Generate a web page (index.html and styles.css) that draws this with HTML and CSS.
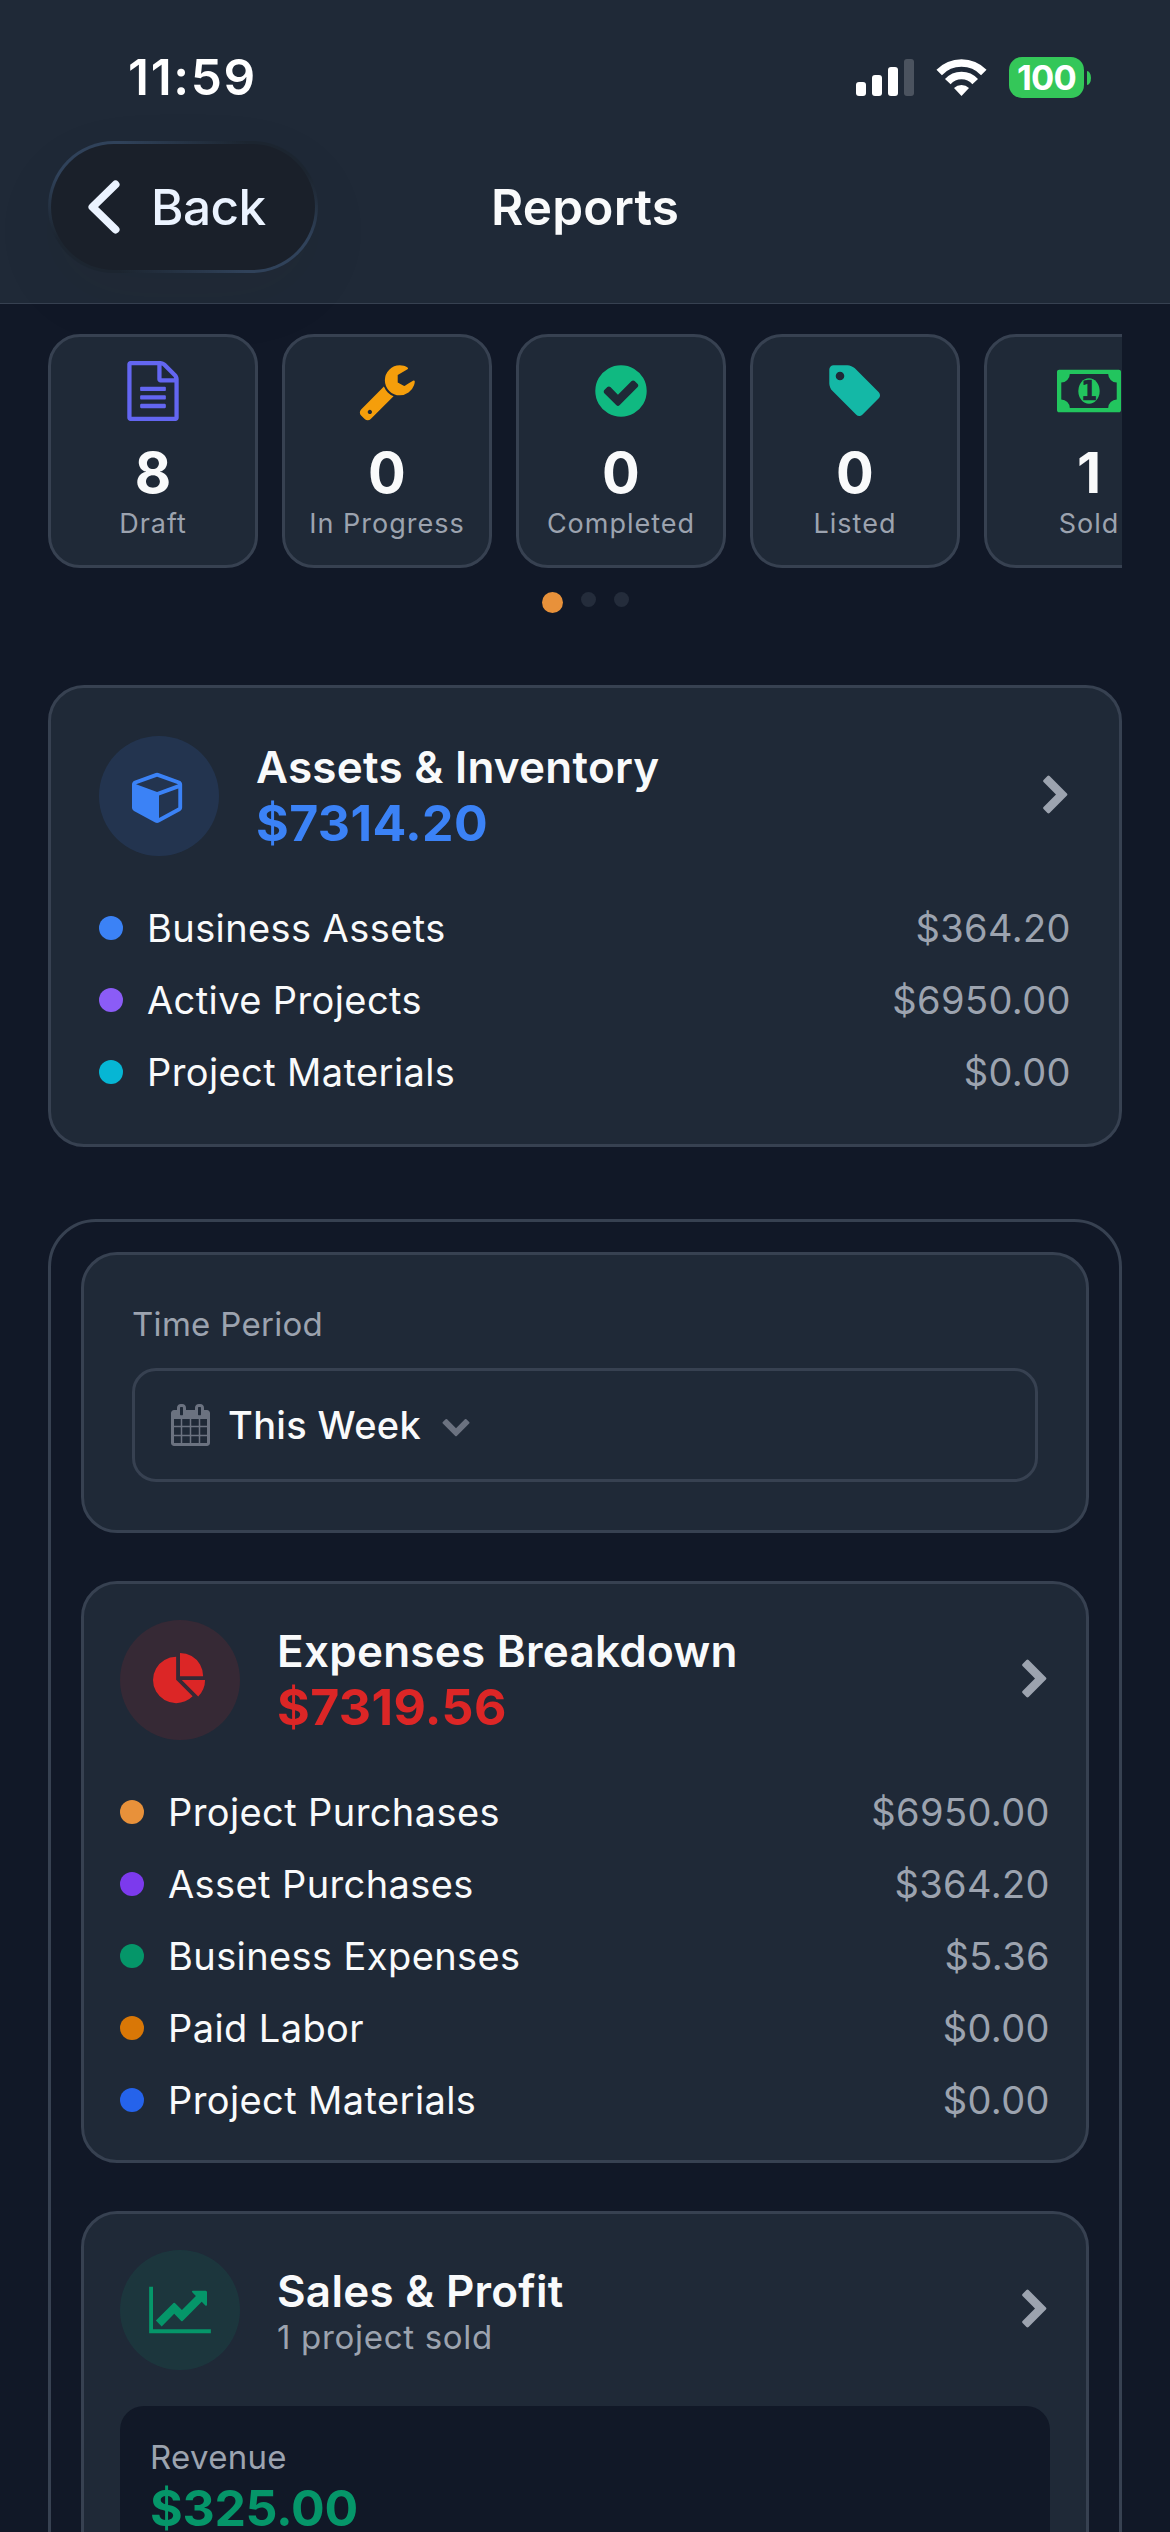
FILE: index.html
```
<!DOCTYPE html>
<html lang="en">

<head>
  <title>Reports</title>
  <meta charset="utf-8">
  <link rel="stylesheet" href="styles.css">
</head>

<body>
  <header>
    <div class="status">
      <span class="time">11:59</span>
      <div class="indicators">
        <svg class="signal" viewBox="0 0 58 37">
          <rect x="0" y="23" width="10" height="14" rx="3" />
          <rect x="16" y="16" width="10" height="21" rx="3" />
          <rect x="32" y="8" width="10" height="29" rx="3" />
          <rect x="48" y="0" width="10" height="37" rx="3" opacity=".2" />
        </svg>
        <svg class="wifi" viewBox="0 0 51 37">
          <path class="arc" d="M3.2 13.5A31 31 0 0 1 47.8 13.5" />
          <path class="arc" d="M11.8 22.6A18.5 18.5 0 0 1 39.2 22.6" />
          <path d="M25.5 37L18 29a11 11 0 0 1 15 0z" />
        </svg>
        <div class="battery">100</div>
        <div class="battery-tip"></div>
      </div>
    </div>
    <nav>
      <button class="back">
        <svg viewBox="0 0 32 54">
          <path d="M27.5 4.5L4.5 27l23 22.5" />
        </svg>
        Back
      </button>
      <h1>Reports</h1>
    </nav>
  </header>

  <main>
    <div class="stats">
      <div class="stat">
        <svg class="icon-lg indigo" viewBox="-128 0 1792 1792">
          <path d="M1468 380q28 28 48 76t20 88v1152q0 40-28 68t-68 28h-1344q-40 0-68-28t-28-68v-1600q0-40 28-68t68-28h896q40 0 88 20t76 48zM1024 136v376h376q-10-29-22-41l-313-313q-12-12-41-22zM1408 1664v-1024h-416q-40 0-68-28t-28-68v-416h-768v1536h1280zM384 800q0-14 9-23t23-9h704q14 0 23 9t9 23v64q0 14-9 23t-23 9h-704q-14 0-23-9t-9-23v-64zM1120 1024q14 0 23 9t9 23v64q0 14-9 23t-23 9h-704q-14 0-23-9t-9-23v-64q0-14 9-23t23-9h704zM1120 1280q14 0 23 9t9 23v64q0 14-9 23t-23 9h-704q-14 0-23-9t-9-23v-64q0-14 9-23t23-9h704z" />
        </svg>
        <strong>8</strong>
        <span>Draft</span>
      </div>
      <div class="stat">
        <svg class="icon-lg amber" viewBox="0 -50 1792 1792">
          <path d="M448 1472q0-26-19-45t-45-19-45 19-19 45 19 45 45 19 45-19 19-45zM1092 1002l-682 682q-37 37-90 37-52 0-91-37l-106-108q-38-36-38-90 0-53 38-91l681-681q39 98 114.500 173.500t173.500 114.500zM1726 567q0 39-23 106-47 134-164.500 217.500t-258.500 83.500q-185 0-316.500-131.500t-131.500-316.500 131.500-316.500 316.500-131.500q58 0 121.500 16.500t107.500 46.500q16 11 16 28t-16 28l-293 169v224l193 107q5-3 79-48.500t135.500-81 70.500-35.500q15 0 23.500 10t8.500 25z" />
        </svg>
        <strong>0</strong>
        <span>In Progress</span>
      </div>
      <div class="stat">
        <svg class="icon-lg emerald" viewBox="0 0 1792 1792">
          <path d="M1412 734q0-28-18-46l-91-90q-19-19-45-19t-45 19l-408 407-226-226q-19-19-45-19t-45 19l-91 90q-18 18-18 46 0 27 18 45l362 362q19 19 45 19 27 0 46-19l543-543q18-18 18-45zM1664 896q0 209-103 385.500t-279.500 279.500-385.500 103-385.500-103-279.500-279.500-103-385.500 103-385.500 279.500-279.500 385.500-103 385.500 103 279.500 279.500 103 385.500z" />
        </svg>
        <strong>0</strong>
        <span>Completed</span>
      </div>
      <div class="stat">
        <svg class="icon-lg teal" viewBox="0 0 1792 1792">
          <path d="M576 448q0-53-37.500-90.500t-90.500-37.500-90.500 37.500-37.500 90.500 37.500 90.500 90.500 37.500 90.500-37.500 37.500-90.500zM1643 1024q0 53-37 90l-491 492q-39 37-91 37-53 0-90-37l-715-716q-38-37-64.500-101t-26.500-117v-416q0-52 38-90t90-38h416q53 0 117 26.500t102 64.500l715 714q37 39 37 91z" />
        </svg>
        <strong>0</strong>
        <span>Listed</span>
      </div>
      <div class="stat">
        <svg class="icon-lg money green" viewBox="0 0 1920 1792">
          <path fill-rule="evenodd" d="M1792 1152v-512q-106 0-181-75t-75-181h-1152q0 106-75 181t-181 75v512q106 0 181 75t75 181h1152q0-106 75-181t181-75zM1920 320v1152q0 26-19 45t-45 19h-1792q-26 0-45-19t-19-45v-1152q0-26 19-45t45-19h1792q26 0 45 19t19 45z" />
          <ellipse cx="960" cy="896" rx="320" ry="384" />
          <text x="960" y="1152" text-anchor="middle">1</text>
        </svg>
        <strong>1</strong>
        <span>Sold</span>
      </div>
    </div>
    <div class="pager">
      <i class="active"></i>
      <i></i>
      <i></i>
    </div>

    <section class="card assets">
      <div class="card-head">
        <div class="badge blue">
          <svg class="icon" viewBox="0 0 1792 1792">
            <path d="M896 1629l640-349v-636l-640 233v752zM832 764l698-254-698-254-698 254zM1664 512v768q0 35-18 65t-49 47l-704 384q-28 16-61 16t-61-16l-704-384q-31-17-49-47t-18-65v-768q0-40 23-73t61-47l704-256q22-8 44-8t44 8l704 256q38 14 61 47t23 73z" />
          </svg>
        </div>
        <div class="heading">
          <h2>Assets &amp; Inventory</h2>
          <div class="amount blue">$7314.20</div>
        </div>
        <svg class="chevron" viewBox="256 0 1280 1792">
          <path d="M1363 877l-742 742q-19 19-45 19t-45-19l-166-166q-19-19-19-45t19-45l531-531-531-531q-19-19-19-45t19-45l166-166q19-19 45-19t45 19l742 742q19 19 19 45t-19 45z" />
        </svg>
      </div>
      <ul>
        <li><i class="dot" style="background: #3b82f6"></i>Business Assets<span>$364.20</span></li>
        <li><i class="dot" style="background: #8b5cf6"></i>Active Projects<span>$6950.00</span></li>
        <li><i class="dot" style="background: #06b6d4"></i>Project Materials<span>$0.00</span></li>
      </ul>
    </section>

    <div class="period-group">
      <section class="card period">
        <label>Time Period</label>
        <div class="select">
          <svg class="calendar" viewBox="64 0 1664 1792">
            <path d="M192 1664h288v-288h-288v288zM544 1664h320v-288h-320v288zM192 1312h288v-320h-288v320zM544 1312h320v-320h-320v320zM192 928h288v-288h-288v288zM928 1664h320v-288h-320v288zM544 928h320v-288h-320v288zM1312 1664h288v-288h-288v288zM928 1312h320v-320h-320v320zM576 448v-288q0-13-9.500-22.500t-22.500-9.500h-64q-13 0-22.500 9.500t-9.500 22.500v288q0 13 9.500 22.500t22.500 9.500h64q13 0 22.500-9.500t9.500-22.500zM1312 1312h288v-320h-288v320zM928 928h320v-288h-320v288zM1312 928h288v-288h-288v288zM1344 448v-288q0-13-9.500-22.500t-22.500-9.500h-64q-13 0-22.500 9.500t-9.500 22.500v288q0 13 9.500 22.500t22.500 9.500h64q13 0 22.500-9.500t9.500-22.500zM1728 384v1280q0 52-38 90t-90 38h-1408q-52 0-90-38t-38-90v-1280q0-52 38-90t90-38h128v-96q0-66 47-113t113-47h64q66 0 113 47t47 113v96h384v-96q0-66 47-113t113-47h64q66 0 113 47t47 113v96h128q52 0 90 38t38 90z" />
          </svg>
          This Week
          <svg class="caret" viewBox="0 0 1792 1792">
            <path d="M1683 808l-742 741q-19 19-45 19t-45-19l-742-741q-19-19-19-45.500t19-45.500l166-165q19-19 45-19t45 19l531 531 531-531q19-19 45-19t45 19l166 165q19 19 19 45.500t-19 45.500z" />
          </svg>
        </div>
      </section>

      <section class="card">
        <div class="card-head">
          <div class="badge red">
            <svg class="icon" viewBox="0 0 1792 1792">
              <path d="M768 890l546 546q-106 108-247.500 168t-298.500 60q-209 0-385.500-103t-279.500-279.500-103-385.500 103-385.500 279.500-279.500 385.500-103v762zM955 896h773q0 157-60 298.500t-168 247.500zM1664 768h-768v-768q209 0 385.500 103t279.500 279.500 103 385.500z" />
            </svg>
          </div>
          <div class="heading">
            <h2>Expenses Breakdown</h2>
            <div class="amount red">$7319.56</div>
          </div>
          <svg class="chevron" viewBox="256 0 1280 1792">
            <path d="M1363 877l-742 742q-19 19-45 19t-45-19l-166-166q-19-19-19-45t19-45l531-531-531-531q-19-19-19-45t19-45l166-166q19-19 45-19t45 19l742 742q19 19 19 45t-19 45z" />
          </svg>
        </div>
        <ul>
          <li><i class="dot" style="background: #e8913a"></i>Project Purchases<span>$6950.00</span></li>
          <li><i class="dot" style="background: #7c3aed"></i>Asset Purchases<span>$364.20</span></li>
          <li><i class="dot" style="background: #059669"></i>Business Expenses<span>$5.36</span></li>
          <li><i class="dot" style="background: #d97706"></i>Paid Labor<span>$0.00</span></li>
          <li><i class="dot" style="background: #2563eb"></i>Project Materials<span>$0.00</span></li>
        </ul>
      </section>

      <section class="card">
        <div class="card-head">
          <div class="badge profit">
            <svg class="icon chart" viewBox="0 0 2048 1792">
              <path d="M2048 1536v128h-2048v-1536h128v1408h1920zM1920 288v435q0 21-19.500 29.500t-35.500-7.500l-121-121-633 633q-10 10-23 10t-23-10l-233-233-416 416-192-192 585-585q10-10 23-10t23 10l233 233 464-464-121-121q-16-16-7.500-35.500t19.500-19.500h435q14 0 23 9t9 23z" />
            </svg>
          </div>
          <div class="heading">
            <h2>Sales &amp; Profit</h2>
            <p>1 project sold</p>
          </div>
          <svg class="chevron" viewBox="256 0 1280 1792">
            <path d="M1363 877l-742 742q-19 19-45 19t-45-19l-166-166q-19-19-19-45t19-45l531-531-531-531q-19-19-19-45t19-45l166-166q19-19 45-19t45 19l742 742q19 19 19 45t-19 45z" />
          </svg>
        </div>
        <div class="revenue">
          <label>Revenue</label>
          <div class="amount profit">$325.00</div>
        </div>
      </section>
    </div>
  </main>
</body>

</html>
```
FILE: styles.css
```
* {
  box-sizing: border-box;
  margin: 0;
  padding: 0;
}

body {
  height: 2532px;
  overflow: hidden;
  background-color: #111827;
  color: #f9fafb;
  font-family: Inter, "Liberation Sans", sans-serif;
}

svg {
  display: block;
  flex: none;
  fill: currentColor;
}

/* header */
header {
  height: 304px;
  background-color: #1f2937;
  border-bottom: 1px solid #374151;
}

.status {
  height: 141px;
  padding: 57px 79px 0 128px;
  display: flex;
  justify-content: space-between;
  align-items: flex-start;
  color: white;
}

.time {
  font-size: 49.5px;
  font-weight: 600;
  line-height: 41px;
  letter-spacing: 1.7px;
}

.indicators {
  height: 41px;
  display: flex;
  align-items: center;
}

.signal {
  width: 58px;
  height: 37px;
}

.wifi {
  width: 51px;
  height: 37px;
  margin: 0 22px;
}

.arc {
  fill: none;
  stroke: white;
  stroke-width: 7.6;
}

.battery {
  width: 75px;
  height: 41px;
  border-radius: 13px;
  background-color: #34c759;
  font-size: 34.5px;
  font-weight: 700;
  line-height: 41px;
  letter-spacing: -.8px;
  text-align: center;
}

.battery-tip {
  width: 4px;
  height: 14px;
  margin-left: 3px;
  border-radius: 0 4px 4px 0 / 0 7px 7px 0;
  background-color: #34c759;
}

nav {
  padding: 0 48px;
  display: grid;
  grid-template-columns: 1fr auto 1fr;
  align-items: center;
}

.back {
  width: 270px;
  height: 132px;
  padding-left: 37px;
  display: flex;
  align-items: center;
  gap: 31px;
  border: 3px solid transparent;
  border-radius: 66px;
  /* fill, then the rim that fades out at the top right and bottom left */
  background:
    linear-gradient(#1a202a, #1a202a) padding-box,
    linear-gradient(27deg, #1c2530 14%, #30425a 38%, #30425a 62%, #1c2530 86%) border-box;
  box-shadow: 0 24px 72px rgba(34, 38, 26, .05);
  color: #ebf3ff;
  font-family: inherit;
  font-size: 49.5px;
  font-weight: 500;
  letter-spacing: -.6px;
}

.back svg {
  width: 32px;
  height: 54px;
}

.back path {
  fill: none;
  stroke: #ebf3ff;
  stroke-width: 8;
  stroke-linecap: round;
  stroke-linejoin: round;
}

h1 {
  font-size: 49.5px;
  font-weight: 600;
  letter-spacing: .2px;
}

main {
  padding: 30px 48px 0;
}

/* status counters */
.stats {
  display: flex;
  gap: 24px;
  overflow: hidden;
}

.stat {
  flex: 0 0 210px;
  height: 234px;
  padding-top: 24px;
  display: flex;
  flex-direction: column;
  align-items: center;
  background-color: #1f2937;
  border: 3px solid #374151;
  border-radius: 32px;
}

.stat strong {
  margin-top: 19px;
  font-size: 56px;
  line-height: 66px;
}

.stat span {
  color: #9ca3af;
  font-size: 27px;
  line-height: 36px;
  letter-spacing: 1px;
}

.icon-lg {
  width: 60px;
  height: 60px;
}

.money {
  width: 64px;
}

.money text {
  fill: #1f2937;
  stroke: #1f2937;
  stroke-width: 20;
  font: bold 780px "DejaVu Sans Mono", monospace;
}

.indigo { color: #6366f1; }
.amber { color: #f59e0b; }
.emerald { color: #10b981; }
.teal { color: #14b8a6; }
.green { color: #22c55e; }

.pager {
  height: 21px;
  margin: 24px 0 72px;
  display: flex;
  justify-content: center;
  gap: 18px;
}

.pager i {
  width: 15px;
  height: 15px;
  border-radius: 50%;
  background-color: #242c3b;
}

.pager .active {
  width: 21px;
  height: 21px;
  background-color: #e8913a;
}

/* cards */
.card {
  padding: 36px;
  background-color: #1f2937;
  border: 3px solid #374151;
  border-radius: 36px;
}

.assets {
  padding: 48px;
}

.card-head {
  display: flex;
  align-items: center;
}

.badge {
  width: 120px;
  height: 120px;
  display: flex;
  align-items: center;
  justify-content: center;
  border-radius: 50%;
}

.blue { color: #3b82f6; }
.red { color: #dc2626; }
.profit { color: #059669; }

.badge.blue { background-color: rgba(59, 130, 246, .13); }
.badge.red { background-color: rgba(220, 38, 38, .12); }
.badge.profit { background-color: rgba(5, 150, 105, .13); }

.icon {
  width: 54px;
  height: 54px;
}

.chart {
  width: 62px;
}

.heading {
  flex: 1;
  margin-left: 37px;
}

h2 {
  font-size: 44px;
  font-weight: 600;
  line-height: 54px;
  letter-spacing: .25px;
}

.amount {
  font-size: 50px;
  font-weight: 700;
  line-height: 58px;
  letter-spacing: .4px;
}

.heading p {
  color: #9ca3af;
  font-size: 33px;
  line-height: 39px;
  letter-spacing: .7px;
}

.chevron {
  width: 30px;
  height: 42px;
  color: #9ca3af;
}

ul {
  margin-top: 48px;
  display: grid;
  gap: 24px;
  list-style: none;
}

li {
  height: 48px;
  display: flex;
  align-items: center;
  font-size: 38px;
  letter-spacing: .4px;
}

li span {
  margin-left: auto;
  color: #9ca3af;
}

.dot {
  width: 24px;
  height: 24px;
  margin-right: 24px;
  border-radius: 50%;
}

/* time period and the reports that depend on it */
.period-group {
  margin-top: 72px;
  padding: 30px;
  display: grid;
  gap: 48px;
  border: 3px solid #374151;
  border-radius: 48px;
}

.period {
  padding: 48px;
}

label {
  display: block;
  color: #9ca3af;
  font-size: 33px;
  line-height: 42px;
  letter-spacing: .3px;
}

.select {
  height: 114px;
  margin-top: 23px;
  padding-left: 36px;
  display: flex;
  align-items: center;
  border: 3px solid #374151;
  border-radius: 24px;
  font-size: 38px;
  font-weight: 500;
  letter-spacing: .35px;
}

.calendar {
  width: 39px;
  height: 42px;
  margin-right: 18px;
  color: #6b7280;
}

.caret {
  width: 30px;
  height: 30px;
  margin-left: 20px;
  color: #6b7280;
}

.revenue {
  height: 240px;
  margin-top: 36px;
  padding: 30px;
  background-color: #111827;
  border-radius: 24px;
}

.revenue .amount {
  margin-top: 9px;
  line-height: 43px;
  letter-spacing: -.3px;
}
```
